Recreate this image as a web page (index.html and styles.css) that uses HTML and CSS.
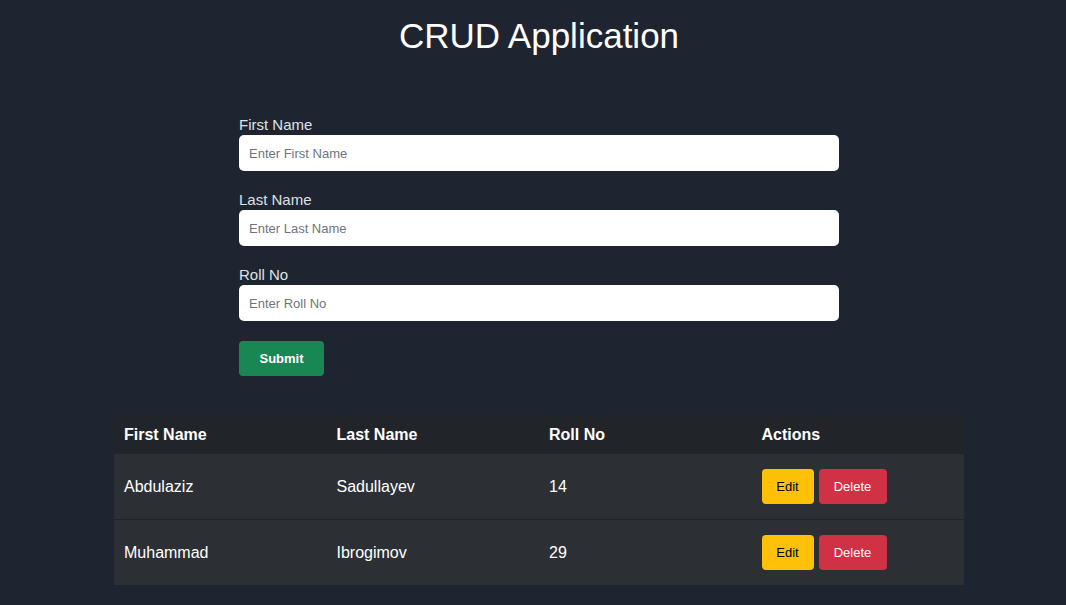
FILE: index.html
```html
<!DOCTYPE html>
<html lang="en">
<head>
<meta charset="UTF-8">
<title>CRUD Application</title>
<link rel="stylesheet" href="styles.css">
</head>
<body>
<div class="page">
  <h1 class="title">CRUD Application</h1>
  <form class="form">
    <div class="field">
      <label class="label" for="first">First Name</label>
      <input class="input" id="first" type="text" placeholder="Enter First Name">
    </div>
    <div class="field">
      <label class="label" for="last">Last Name</label>
      <input class="input" id="last" type="text" placeholder="Enter Last Name">
    </div>
    <div class="field">
      <label class="label" for="roll">Roll No</label>
      <input class="input" id="roll" type="text" placeholder="Enter Roll No">
    </div>
    <button class="btn btn-submit" type="button">Submit</button>
  </form>
  <table class="table">
    <thead>
      <tr>
        <th>First Name</th>
        <th>Last Name</th>
        <th>Roll No</th>
        <th>Actions</th>
      </tr>
    </thead>
    <tbody>
      <tr>
        <td>Abdulaziz</td>
        <td>Sadullayev</td>
        <td>14</td>
        <td><div class="actions"><button class="btn btn-edit" type="button">Edit</button><button class="btn btn-delete" type="button">Delete</button></div></td>
      </tr>
      <tr>
        <td>Muhammad</td>
        <td>Ibrogimov</td>
        <td>29</td>
        <td><div class="actions"><button class="btn btn-edit" type="button">Edit</button><button class="btn btn-delete" type="button">Delete</button></div></td>
      </tr>
    </tbody>
  </table>
</div>
</body>
</html>
```
FILE: styles.css
```css
* { box-sizing: border-box; }

html, body {
  margin: 0;
  padding: 0;
  background: #1e2430;
}

body {
  font-family: "Liberation Sans", Arial, sans-serif;
  color: #ffffff;
}

.page {
  margin-left: 12px;
  display: flex;
  flex-direction: column;
  align-items: center;
  padding-top: 16px;
}

.title {
  margin: 0;
  font-size: 35px;
  line-height: 40px;
  font-weight: 400;
  color: #ffffff;
}

.form {
  width: 600px;
  margin-top: 60px;
  display: flex;
  flex-direction: column;
  align-items: flex-start;
}

.field {
  width: 100%;
  margin-bottom: 20px;
}

.label {
  display: block;
  font-size: 15px;
  line-height: 18px;
  color: #dee2e6;
  margin-bottom: 1px;
}

.input {
  display: block;
  width: 100%;
  height: 36px;
  border: none;
  border-radius: 5px;
  background: #ffffff;
  padding: 0 10px;
  font-family: "Liberation Sans", Arial, sans-serif;
  font-size: 13px;
  color: #212529;
  outline: none;
}

.input::placeholder {
  color: #6c757d;
  opacity: 1;
}

.btn {
  height: 35px;
  border: none;
  border-radius: 4px;
  font-family: "Liberation Sans", Arial, sans-serif;
  font-size: 13px;
  padding: 0;
  cursor: pointer;
}

.btn-submit {
  background: #198754;
  color: #ffffff;
  font-weight: 700;
  width: 85px;
}

.btn-edit {
  background: #ffc107;
  color: #000000;
  width: 52px;
}

.btn-delete {
  background: #d03145;
  color: #ffffff;
  width: 68px;
}

.actions {
  display: flex;
  gap: 5px;
}

.table {
  width: 850px;
  margin-top: 40px;
  border-collapse: collapse;
  table-layout: fixed;
  font-size: 16px;
}

.table th {
  background: #212529;
  text-align: left;
  font-weight: 700;
  padding: 10px 10px;
  line-height: 18px;
}

.table td {
  background: #2c3034;
  padding: 15px 10px;
  line-height: 18px;
  vertical-align: middle;
}

.table tbody tr:first-child td {
  border-bottom: 1px solid #1f2327;
}
```
